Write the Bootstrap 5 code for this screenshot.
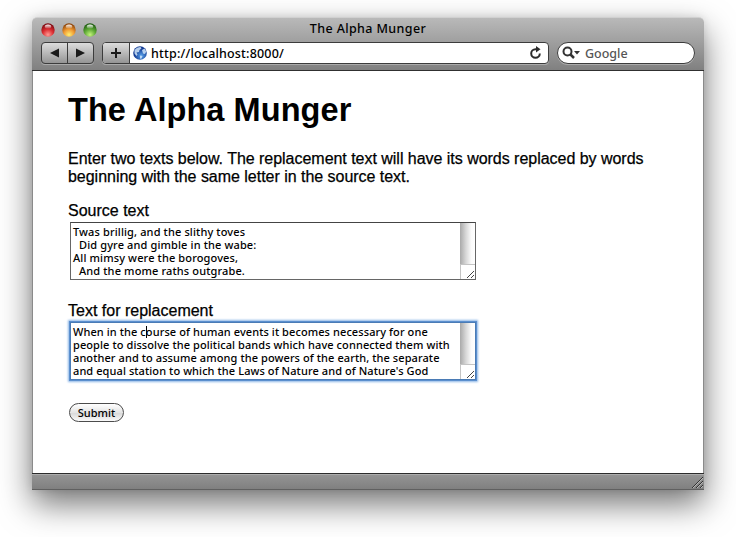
<!DOCTYPE html>
<html lang="en">
<head>
<meta charset="utf-8">
<meta name="viewport" content="width=device-width, initial-scale=1">
<title>The Alpha Munger</title>
<link href="https://cdn.jsdelivr.net/npm/bootstrap@5.3.0/dist/css/bootstrap.min.css" rel="stylesheet">
<style>
body { background: #fff; height: 537px; padding: 17px 32px 0; font-family: "Liberation Sans", Arial, sans-serif; color: #000; }
.lucida { font-family: "Noto Sans", "Open Sans", sans-serif; font-weight: 500; }
.win { width: 672px; height: 473px; border-radius: 5px 5px 0 0; box-shadow: 0 14px 33px 0 rgba(0,0,0,.55), 0 0 9px rgba(0,0,0,.1); }
.chrome { height: 54px; background: linear-gradient(#b9b9b9, #9a9a9a 55%, #808080); border-top: 1px solid #d0d0d0; border-bottom: 1px solid #303030; border-radius: 5px 5px 0 0; }
.titlebar { height: 24px; padding-left: 9px; }
.wintitle { font-size: 12.5px; line-height: 23px; letter-spacing: .38px; top: -1px; }
.lights svg { display: block; margin: -1px 7px 0 0; }
.tools { height: 23px; padding: 0 9px; }
.seg { height: 22px; border: 1px solid #3c3c3c; box-shadow: 0 1px 0 rgba(255,255,255,.3); }
.keys { width: 53px; border-radius: 4px; background: linear-gradient(#dcdcdc, #959595); margin-right: 8px; }
.keys > span + span { border-left: 1px solid #3c3c3c; }
.addr { width: 447px; border-radius: 4px; margin-right: 8px; background: #fff; }
.plus { width: 27px; background: linear-gradient(#dcdcdc, #959595); border-right: 1px solid #3c3c3c; border-radius: 3px 0 0 3px; }
.url { font-size: 12.5px; line-height: 20px; margin-left: 2px; padding-top: 2px; letter-spacing: .18px; }
.search { width: 138px; border-radius: 11px; background: #fff; color: #555; font-size: 12.5px; line-height: 20px; }
.engine { margin-left: 5px; padding-top: 2px; }
.page { height: 402px; border: solid #8a8a8a; border-width: 0 1px; padding: 21px 35px 0; }
.page h1 { font-size: 32.5px; line-height: 37px; margin-bottom: 21px; font-weight: 700; letter-spacing: .07px; }
.intro { font-size: 16px; line-height: 18px; margin-bottom: 16px; letter-spacing: -.028px; -webkit-text-stroke: .25px #000; }
.caption { font-size: 16px; line-height: 18px; -webkit-text-stroke: .25px #000; }
.area + .caption { margin-top: 22px; }
.area { width: 406px; height: 58px; margin: 2px 0 0 2px; border: 1px solid #666; border-top-color: #444; font-size: 11px; line-height: 13px; color: #000; letter-spacing: .13px; }
.area.focused { border-color: #4a7bb5; box-shadow: 0 0 0 1px #5b8fce, 0 0 2px 2px #8db6e6; letter-spacing: .086px; }
.lines { padding: 2px 0 0 2px; white-space: pre; }
.lines span { display: block; width: max-content; }
.vscroll { width: 15px; }
.track { background: linear-gradient(90deg, #a9a9a9, #d8d8d8 40%, #fafafa 75%, #fff); }
.grip { height: 15px; border: solid #c4c4c4; border-width: 1px 0 0 1px; }
.caret { left: 75px; top: 3px; width: 1px; height: 12px; background: #000; }
.submit { width: 55px; height: 19px; margin: 23px 0 0 1px; padding: 0; border: 1px solid #4c4c4c; border-radius: 10px; background: linear-gradient(#fff, #e4e4e4 50%, #dadada 55%, #fafafa); font-size: 11px; line-height: 17px; color: #000; }
.status { height: 17px; background: linear-gradient(#959595, #808080); border-top: 1px solid #2c2c2c; border-bottom: 1px solid #606060; box-shadow: inset 0 1px 0 #adadad; padding: 0 1px 1px; }
</style>
</head>
<body>
<svg width="0" height="0" class="position-absolute">
  <defs>
    <radialGradient id="red" cy=".85" r=".8"><stop offset="0" stop-color="#ff9a94"/><stop offset=".5" stop-color="#dc2e32"/><stop offset="1" stop-color="#7c0810"/></radialGradient>
    <radialGradient id="amber" cy=".85" r=".8"><stop offset="0" stop-color="#ffee70"/><stop offset=".5" stop-color="#f09a34"/><stop offset="1" stop-color="#8c4208"/></radialGradient>
    <radialGradient id="green" cy=".85" r=".8"><stop offset="0" stop-color="#c4f47c"/><stop offset=".5" stop-color="#62ac38"/><stop offset="1" stop-color="#1e5c10"/></radialGradient>
    <radialGradient id="globe" cx=".6" cy=".7"><stop offset="0" stop-color="#5aa2ea"/><stop offset="1" stop-color="#143c94"/></radialGradient>
    <linearGradient id="shine" x2="0" y2="1"><stop offset="0" stop-color="#fff" stop-opacity=".95"/><stop offset="1" stop-color="#fff" stop-opacity=".1"/></linearGradient>
  </defs>
</svg>
<main class="win d-flex flex-column">
  <header class="chrome">
    <div class="titlebar d-flex align-items-center position-relative">
      <div class="lights d-flex">
        <svg width="14" height="14"><circle cx="7" cy="7" r="6.7" fill="url(#red)"/><ellipse cx="7" cy="3.6" rx="3.2" ry="2" fill="url(#shine)"/></svg>
        <svg width="14" height="14"><circle cx="7" cy="7" r="6.7" fill="url(#amber)"/><ellipse cx="7" cy="3.6" rx="3.2" ry="2" fill="url(#shine)"/></svg>
        <svg width="14" height="14"><circle cx="7" cy="7" r="6.7" fill="url(#green)"/><ellipse cx="7" cy="3.6" rx="3.2" ry="2" fill="url(#shine)"/></svg>
      </div>
      <div class="wintitle lucida position-absolute start-0 end-0 text-center">The Alpha Munger</div>
    </div>
    <div class="tools d-flex">
      <div class="seg keys d-flex">
        <span class="flex-fill d-flex align-items-center justify-content-center"><svg width="9" height="10"><path d="M0 5L9 .5v9z" fill="#1a1a1a"/></svg></span>
        <span class="flex-fill d-flex align-items-center justify-content-center"><svg width="9" height="10"><path d="M9 5L0 .5v9z" fill="#1a1a1a"/></svg></span>
      </div>
      <div class="seg addr d-flex align-items-center">
        <span class="plus h-100 d-flex align-items-center justify-content-center"><svg width="10" height="10"><path d="M5 0v10M0 5h10" stroke="#1a1a1a" stroke-width="2"/></svg></span>
        <svg style="margin-left:3px" width="14" height="14"><circle cx="7" cy="7" r="6.8" fill="url(#globe)"/><path d="M1.500 4Q4 .8 7.500 1L8.500 2.500 6.500 4 6 6 3.500 6.500 4.500 8.500 3.500 10 1.500 7.500zM9 4l2.500-1.500 1.800 3-1.300 2.500-2-.5zM7 9.500l2.500.5-1 2.500-1.500.3z" fill="#d2e8fa" opacity=".85"/></svg>
        <span class="url lucida ms-1">http://localhost:8000/</span>
        <svg class="ms-auto me-1" width="16" height="14"><path d="M11.800 7.500A4.300 4.300 0 1 1 7.500 3.200H9" fill="none" stroke="#2c2c2c" stroke-width="2"/><path d="M8 0l4.500 3.300L8 6.600z" fill="#2c2c2c"/></svg>
      </div>
      <div class="seg search lucida d-flex align-items-center">
        <svg class="ms-1" width="18" height="14"><circle cx="5.500" cy="5.500" r="4" fill="none" stroke="#333" stroke-width="2"/><path d="M8.500 8.500l3.500 3.500" stroke="#333" stroke-width="2.500"/><path d="M12 5h6l-3 3.500z" fill="#333"/></svg>
        <span class="engine">Google</span>
      </div>
    </div>
  </header>
  <section class="page bg-white">
    <h1>The Alpha Munger</h1>
    <p class="intro">Enter two texts below. The replacement text will have its words replaced by words<br>beginning with the same letter in the source text.</p>
    <div class="caption">Source text</div>
    <div class="area lucida d-flex bg-white">
      <div class="lines flex-grow-1"><span>Twas brillig, and the slithy toves</span><span>  Did gyre and gimble in the wabe:</span><span>All mimsy were the borogoves,</span><span>  And the mome raths outgrabe.</span></div>
      <div class="vscroll d-flex flex-column"><div class="track flex-grow-1"></div><div class="grip d-flex align-items-end justify-content-end"><svg width="9" height="9"><path d="M1 8L8 1M5 8L8 5" stroke="#444"/></svg></div></div>
    </div>
    <div class="caption">Text for replacement</div>
    <div class="area focused lucida d-flex bg-white position-relative">
      <div class="lines flex-grow-1"><span>When in the course of human events it becomes necessary for one</span><span>people to dissolve the political bands which have connected them with</span><span>another and to assume among the powers of the earth, the separate</span><span>and equal station to which the Laws of Nature and of Nature's God</span></div>
      <div class="vscroll d-flex flex-column"><div class="track flex-grow-1"></div><div class="grip d-flex align-items-end justify-content-end"><svg width="9" height="9"><path d="M1 8L8 1M5 8L8 5" stroke="#444"/></svg></div></div>
      <i class="caret position-absolute"></i>
    </div>
    <button class="submit lucida d-block" type="button">Submit</button>
  </section>
  <footer class="status d-flex align-items-end justify-content-end"><svg width="12" height="12"><path d="M1 12L12 1M5 12L12 5M9 12L12 9" stroke="#333"/><path d="M2 12L12 2M6 12L12 6M10 12L12 10" stroke="#ccc" stroke-width=".7"/></svg></footer>
</main>
<script src="https://cdn.jsdelivr.net/npm/bootstrap@5.3.0/dist/js/bootstrap.bundle.min.js"></script>
</body>
</html>
